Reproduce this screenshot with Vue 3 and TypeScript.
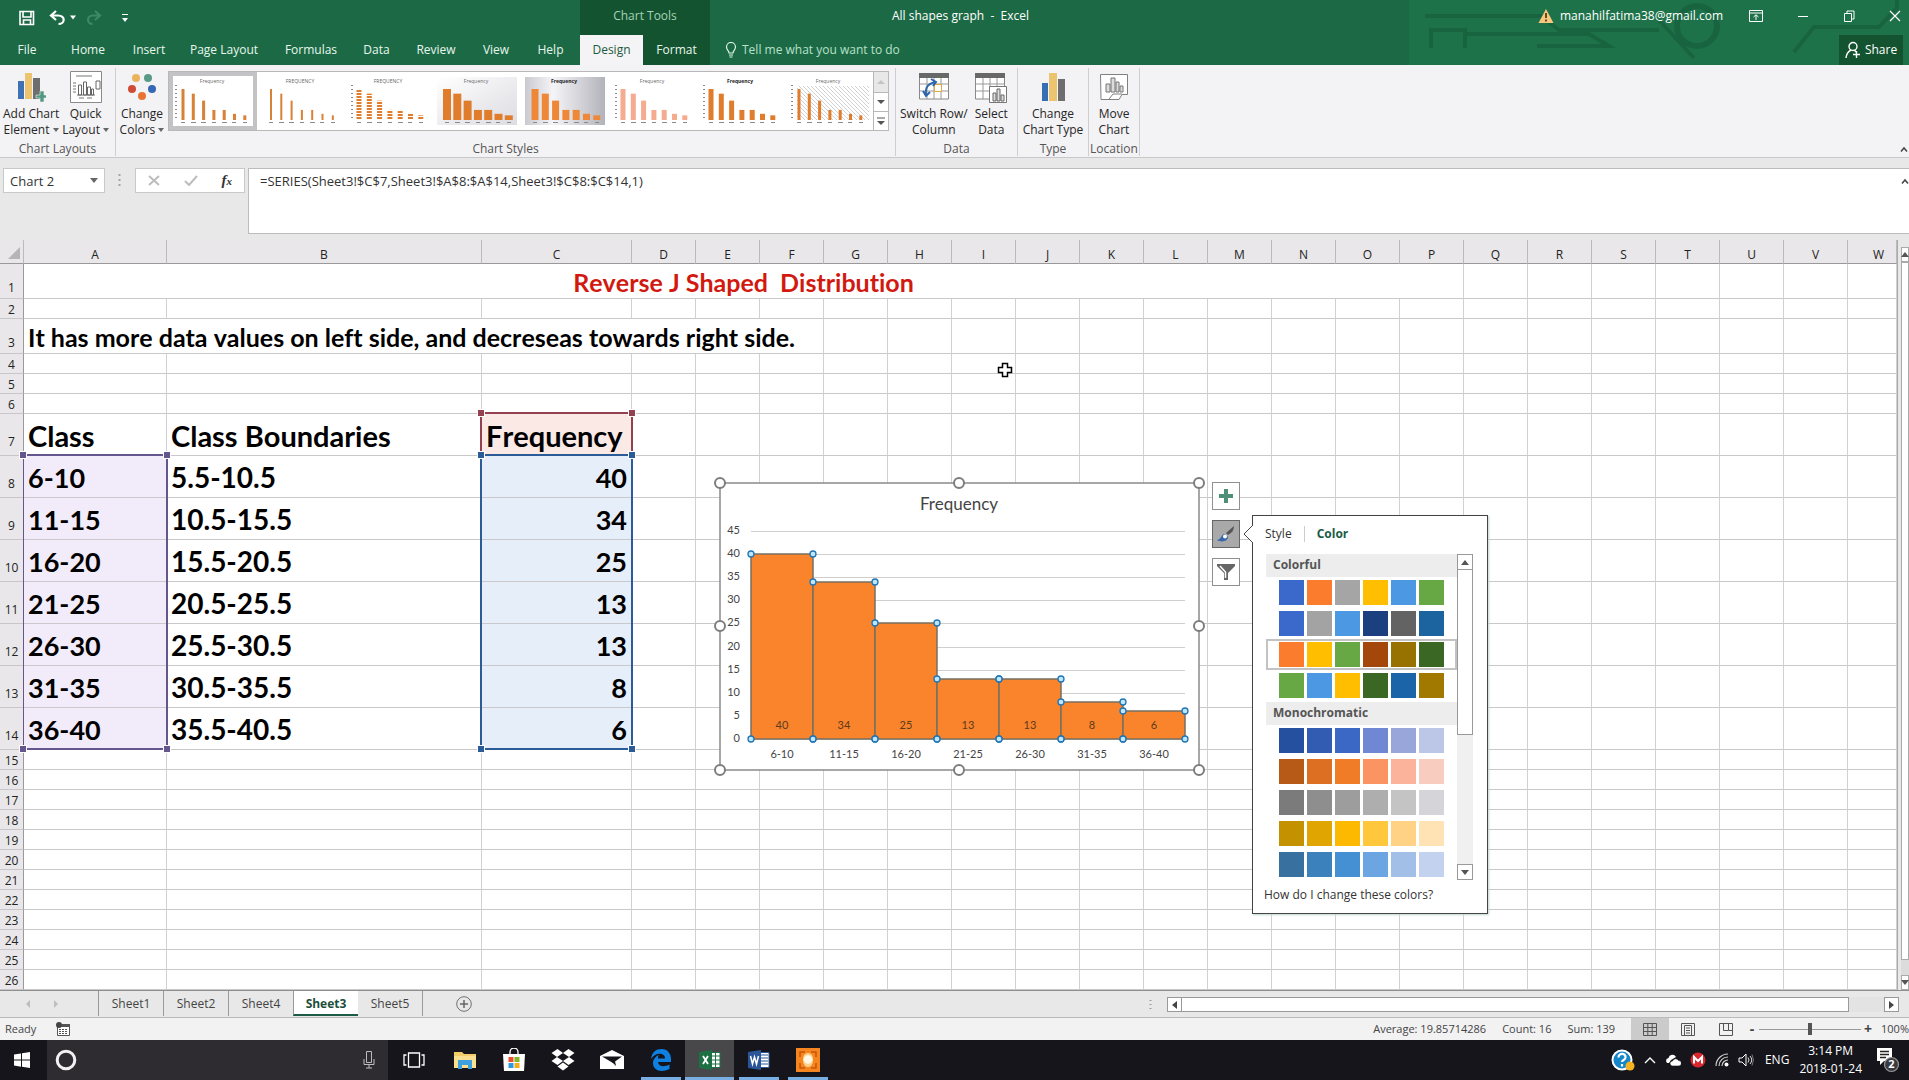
<script setup lang="ts">
import { ref } from 'vue'

const menuTabs = ['File', 'Home', 'Insert', 'Page Layout', 'Formulas', 'Data', 'Review', 'View', 'Help', 'Design', 'Format']

interface StyleThumb { id: number; kind: string; barWidth: number; title: string }
const thumbs: StyleThumb[] = [
  { id: 1, kind: 'plain', barWidth: 3, title: 'Frequency' },
  { id: 2, kind: 'thin', barWidth: 2, title: 'FREQUENCY' },
  { id: 3, kind: 'striped', barWidth: 5, title: 'FREQUENCY' },
  { id: 4, kind: 'wide', barWidth: 8, title: 'Frequency' },
  { id: 5, kind: 'shade', barWidth: 7, title: 'Frequency' },
  { id: 6, kind: 'soft', barWidth: 5, title: 'Frequency' },
  { id: 7, kind: 'dark', barWidth: 5, title: 'Frequency' },
  { id: 8, kind: 'hatch', barWidth: 3, title: 'Frequency' },
]
const activeThumb = ref(1)

const columns = 'ABCDEFGHIJKLMNOPQRSTUVW'.split('')
const categories = ['6-10', '11-15', '16-20', '21-25', '26-30', '31-35', '36-40']
const boundaries = ['5.5-10.5', '10.5-15.5', '15.5-20.5', '20.5-25.5', '25.5-30.5', '30.5-35.5', '35.5-40.5']
const frequencies = [40, 34, 25, 13, 13, 8, 6]
const lastRows = Array.from({ length: 12 }, (_, i) => i + 15)

const base = 256
const unit = 208 / 45
const barX = (i: number) => 31 + i * 62
const barY = (v: number) => Math.round(base - v * unit)
const axis = [0, 5, 10, 15, 20, 25, 30, 35, 40, 45]
const frameHandles = [[0, 0], [239, 0], [479, 0], [0, 143], [479, 143], [0, 287], [239, 287], [479, 287]]

const colorful = [
  ['#3b69cb', '#fb7c2c', '#a5a5a5', '#ffbf00', '#4d98e2', '#68a844'],
  ['#3b69cb', '#a3a3a3', '#4d98e2', '#1c3f80', '#636363', '#1c64a0'],
  ['#fb7c2c', '#ffbf00', '#68a844', '#a3480a', '#987200', '#3b6724'],
  ['#68a844', '#4d98e2', '#ffbf00', '#3b6724', '#1c64a8', '#a17800'],
]
const mono = [
  ['#25509f', '#325bb2', '#3a68c4', '#7088d4', '#98a6da', '#bcc6e6'],
  ['#b75a17', '#dc6f22', '#f07c28', '#fb9463', '#fbb39b', '#f9ccc0'],
  ['#7b7b7b', '#8e8e8e', '#9d9d9d', '#aeaeae', '#c4c4c4', '#d5d5d9'],
  ['#c49100', '#e0a500', '#fcb900', '#ffc83c', '#ffd285', '#ffe3b5'],
  ['#38709f', '#3b82bd', '#4590d2', '#6ba5e2', '#a2bfe8', '#c3d2ef'],
]
const pickedScheme = ref(2)
const sheets = ['Sheet1', 'Sheet2', 'Sheet4', 'Sheet3', 'Sheet5']
const currentSheet = ref('Sheet3')
const nameBox = ref('Chart 2')
const formula = ref('=SERIES(Sheet3!$C$7,Sheet3!$A$8:$A$14,Sheet3!$C$8:$C$14,1)')
const tellMe = ref('')
const zoomLevel = ref(50)
</script>

<template>
  <div class="app">
    <header class="top">
      <svg class="art" viewBox="0 0 500 65" aria-hidden="true">
        <g fill="none" stroke="#17603d" stroke-width="4">
          <path d="M16 16H132L150 30H250M22 48V30H56V48M56 34H180L200 46H128M250 20L285 58" />
          <circle cx="288" cy="26" r="20" stroke-width="6" />
          <path d="M385 52L405 27H470L488 8V0" />
        </g>
      </svg>
      <div class="titlebar">
        <div class="quick">
          <button aria-label="Save"><svg width="16" height="16" viewBox="0 0 16 16"><path d="M1 1.5h13.5v13H1zM4 2v5h8V2M4.500 14V10h7v4" fill="none" stroke="#fff" stroke-width="1.600" /></svg></button>
          <button class="undo" aria-label="Undo"><svg width="28" height="16" viewBox="0 0 28 16"><path d="M7 1L2 5.500L7 10M2.500 5.500H9C17 5.500 16 14 9.500 14" fill="none" stroke="#fff" stroke-width="2.200" /><path d="M21 5.500h6l-3 4z" fill="#fff" /></svg></button>
          <button class="redo" aria-label="Redo"><svg width="28" height="16" viewBox="0 0 28 16"><path d="M10 1l5 4.500L10 10M14.500 5.500H8C1 5.500 2 14 7.500 14" fill="none" stroke="#3a8a63" stroke-width="2.200" /></svg></button>
          <button aria-label="Customize quick access"><svg width="8" height="10" viewBox="0 0 8 10"><path d="M1 1.500h6" stroke="#fff" /><path d="M1 5h6L4 9z" fill="#fff" /></svg></button>
        </div>
        <div class="tools">Chart Tools</div>
        <h1 class="doc">All shapes graph&nbsp; -&nbsp; Excel</h1>
        <div class="account">
          <svg width="16" height="16" viewBox="0 0 16 16"><path d="M8 1L15.500 15H.5z" fill="#f7c77e" /><path d="M8 5v5M8 11.500v2" stroke="#5b3b12" stroke-width="1.800" /></svg>
          <span>manahilfatima38@gmail.com</span>
        </div>
        <div class="winbtns">
          <button aria-label="Ribbon display options"><svg width="14" height="12" viewBox="0 0 14 12"><path d="M.5.5h13v11H.5zM.5 3h13M7 10V5M4.500 7L7 4.800L9.500 7" fill="none" stroke="#fff" /></svg></button>
          <button aria-label="Minimize"><svg width="12" height="12" viewBox="0 0 12 12"><path d="M1 6.500h10" stroke="#fff" /></svg></button>
          <button aria-label="Restore"><svg width="12" height="12" viewBox="0 0 12 12"><path d="M1.500 3.500h7v8h-7zM4 3.500V1h7v8H8.500" fill="none" stroke="#fff" /></svg></button>
          <button aria-label="Close"><svg width="12" height="12" viewBox="0 0 12 12"><path d="M1 1l10 10M11 1L1 11" stroke="#fff" stroke-width="1.200" /></svg></button>
        </div>
      </div>
      <div class="tabrow">
        <nav class="tabs">
          <button v-for="t in menuTabs" :key="t" :class="{ sel: t === 'Design', ctx: t === 'Format' }">{{ t }}</button>
        </nav>
        <label class="tell">
          <svg width="12" height="16" viewBox="0 0 12 16"><path d="M4 11C4 8.500 1.500 8 1.500 5A4.500 4.500 0 0 1 10.500 5C10.500 8 8 8.500 8 11zM4 13h4M4.500 15h3" fill="none" stroke="#dff5e8" stroke-width="1.200" /></svg>
          <input v-model="tellMe" placeholder="Tell me what you want to do" aria-label="Tell me what you want to do" />
        </label>
        <button class="share"><svg width="16" height="18" viewBox="0 0 16 18"><circle cx="8" cy="5.500" r="4" fill="none" stroke="#fff" stroke-width="1.400" /><path d="M6 9C3 10.500 1.500 13 1 17M9.500 9l1.500 2M11.500 10v7M8 13.500h7" fill="none" stroke="#fff" stroke-width="1.400" /></svg>Share</button>
      </div>
    </header>

    <section class="ribbon">
      <div class="group g1">
        <div class="cmds">
          <button class="cmd">
            <svg width="30" height="32" viewBox="0 0 30 32"><path d="M2 10h6v18H2z" fill="#3f72b5" /><path d="M9 2h7v26H9z" fill="#ecc36f" /><path d="M17 7h7v21h-7z" fill="#6e6e6e" /><path d="M20 24h4v-4h4v4h3v3h-3v4h-4v-4h-4z" fill="#4f9a80" stroke="#f4f3f5" stroke-width=".6" /></svg>
            <span>Add Chart<br />Element <i></i></span>
          </button>
          <button class="cmd">
            <svg width="32" height="32" viewBox="0 0 32 32"><path d="M.5.5h31v31H.5z" fill="#fff" stroke="#8a8a8a" /><path d="M6 5h16M9 27h5M17 27h5M3 12h3M3 15h3M3 18h3M3 21h3M7 24h18" stroke="#777" /><path d="M8.500 14h3v10h-3zM13.500 11h3v13h-3zM17.500 16h3v8h-3zM21.500 18h2v6h-2zM26 10h4v8h-4z" fill="none" stroke="#666" /></svg>
            <span>Quick<br />Layout <i></i></span>
          </button>
        </div>
        <div class="gname">Chart Layouts</div>
      </div>
      <div class="group g2">
        <div class="cmds">
          <button class="cmd">
            <svg width="30" height="32" viewBox="0 0 30 32"><circle cx="9" cy="7" r="4" fill="#e9b45d" /><circle cx="21" cy="7" r="4" fill="#589a86" /><circle cx="5" cy="18" r="4" fill="#cf4b35" /><circle cx="25" cy="18" r="4" fill="#3567b5" /><circle cx="15" cy="25" r="4" fill="#e87432" /></svg>
            <span>Change<br />Colors <i></i></span>
          </button>
          <div class="gallery">
            <button v-for="t in thumbs" :key="t.id" :class="['thumb', { on: t.id === activeThumb }]" :aria-label="'Style ' + t.id" @click="activeThumb = t.id">
              <svg viewBox="0 0 88 58" width="88" height="58">
                <defs>
                  <linearGradient id="shadeFill" x1="0" x2="1"><stop offset="0" stop-color="#c9c9d0" /><stop offset=".35" stop-color="#f5f5f8" /><stop offset="1" stop-color="#b3b3bb" /></linearGradient>
                  <linearGradient id="wideFill" x1="0" y1="0" x2="1" y2="1"><stop offset="0" stop-color="#fff" /><stop offset="1" stop-color="#dcdce2" /></linearGradient>
                  <pattern id="hatchFill" width="4" height="4" patternUnits="userSpaceOnUse"><path d="M0 0L4 4" stroke="#bdbdbd" stroke-width=".7" /></pattern>
                  <pattern id="stripeFill" width="6" height="3" patternUnits="userSpaceOnUse"><path d="M0 1h6" stroke="#e07d2c" stroke-width="2" /></pattern>
                </defs>
                <rect v-if="t.kind === 'shade'" x="4" y="5" width="80" height="48" fill="url(#shadeFill)" />
                <rect v-if="t.kind === 'wide'" x="4" y="5" width="80" height="48" fill="url(#wideFill)" />
                <rect v-if="t.kind === 'hatch'" x="12" y="14" width="72" height="34" fill="url(#hatchFill)" />
                <text x="43" y="11" text-anchor="middle" :class="['tt', t.kind]">{{ t.title }}</text>
                <rect v-for="(v, i) in frequencies" :key="i" :class="['tb', t.kind]" :x="14 + i * 10.3 - t.barWidth / 2" :y="48 - v * 0.775" :width="t.barWidth" :height="v * 0.775" />
                <path d="M12 50.500h4M22 50.500h5M32 50.500h5M43 50.500h4M53 50.500h5M63 50.500h4M74 50.500h4" stroke="#8b8b8b" />
                <path v-if="t.kind !== 'wide' && t.kind !== 'shade' && t.kind !== 'thin'" d="M7 13v36" stroke="#888" stroke-width="2" stroke-dasharray="1 3" />
              </svg>
            </button>
            <div class="gscroll">
              <button aria-label="Scroll up" disabled><svg width="8" height="6"><path d="M0 5h8L4 1z" fill="#c4c4c4" /></svg></button>
              <button aria-label="Scroll down"><svg width="8" height="6"><path d="M0 1h8L4 5z" fill="#555" /></svg></button>
              <button aria-label="More styles"><svg width="8" height="9"><path d="M0 1h8" stroke="#555" /><path d="M0 4h8L4 8z" fill="#555" /></svg></button>
            </div>
          </div>
        </div>
        <div class="gname">Chart Styles</div>
      </div>
      <div class="group g3">
        <div class="cmds">
          <button class="cmd">
            <svg width="30" height="32" viewBox="0 0 30 32"><path d="M.5 3h29v25H.5z" fill="#fff" stroke="#888" /><path d="M0 2h30v5H0z" fill="#686868" /><path d="M.5 13h29M.5 20h29M8 7v21M15 7v21M22 7v21" stroke="#999" fill="none" /><path d="M15.500 13.500h7v7h-7z" fill="#fff" stroke="#e0a943" /><path d="M7 24C6 16 9 13 16 11M4 20l3 5l4-4M12 8l5 3l-3 4" fill="none" stroke="#2c66ad" stroke-width="2" /></svg>
            <span>Switch Row/<br />Column</span>
          </button>
          <button class="cmd">
            <svg width="32" height="32" viewBox="0 0 32 32"><path d="M.5 3h29v25H.5z" fill="#fff" stroke="#888" /><path d="M0 2h30v5H0z" fill="#686868" /><path d="M.5 13h29M.5 20h29M8 7v21M15 7v21M22 7v21" stroke="#999" fill="none" /><path d="M14.500 15.500h17v16h-17z" fill="#fff" stroke="#777" /><path d="M18 22h3v8h-3zM22 18h3v12h-3zM26 24h3v6h-3z" fill="#ddd" stroke="#666" /></svg>
            <span>Select<br />Data</span>
          </button>
        </div>
        <div class="gname">Data</div>
      </div>
      <div class="group g4">
        <div class="cmds">
          <button class="cmd">
            <svg width="26" height="32" viewBox="0 0 26 32"><path d="M2 12h6v18H2z" fill="#356fb5" /><path d="M9 2h8v28H9z" fill="#ecc36f" /><path d="M18 8h7v22h-7z" fill="#6e6e6e" /></svg>
            <span>Change<br />Chart Type</span>
          </button>
        </div>
        <div class="gname">Type</div>
      </div>
      <div class="group g5">
        <div class="cmds">
          <button class="cmd">
            <svg width="28" height="32" viewBox="0 0 28 32"><path d="M.5 3.500h27v20H22l-3 5H1z" fill="#fff" stroke="#808080" /><path d="M9 28l4-5h9" fill="none" stroke="#808080" /><path d="M6 13h4v8H6zM11 7h4v14h-4zM16 11h3v10h-3zM20 15h3v6h-3z" fill="#ddd" stroke="#777" /></svg>
            <span>Move<br />Chart</span>
          </button>
        </div>
        <div class="gname">Location</div>
      </div>
      <button class="collapse" aria-label="Collapse the ribbon"><svg width="8" height="7" viewBox="0 0 8 7"><path d="M1 5.500L4 2L7 5.500" fill="none" stroke="#444" stroke-width="1.500" /></svg></button>
    </section>

    <section class="fbar">
      <div class="namebox"><input v-model="nameBox" aria-label="Name box" /><svg width="8" height="5"><path d="M0 0h8L4 5z" fill="#666" /></svg></div>
      <svg class="grip" width="3" height="16"><path d="M1.500 1v14" stroke="#a5a5a5" stroke-width="2" stroke-dasharray="2 3" /></svg>
      <div class="fx">
        <button aria-label="Cancel"><svg width="12" height="11"><path d="M1 1l10 9M11 1L1 10" stroke="#bdbdbd" stroke-width="2" /></svg></button>
        <button aria-label="Enter"><svg width="14" height="11"><path d="M1 6l4 4L13 1" fill="none" stroke="#bdbdbd" stroke-width="2" /></svg></button>
        <button class="fxi" aria-label="Insert function">f<sub>x</sub></button>
      </div>
      <textarea v-model="formula" aria-label="Formula bar" spellcheck="false"></textarea>
      <button class="collapse2" aria-label="Collapse formula bar"><svg width="8" height="7" viewBox="0 0 8 7"><path d="M1 5.500L4 2L7 5.500" fill="none" stroke="#444" stroke-width="1.500" /></svg></button>
    </section>

    <main class="stage">
      <table class="sheet">
        <colgroup><col class="ch" /><col class="ca" /><col class="cb" /><col class="cc" /><col v-for="n in 19" :key="n" class="cn" /><col /></colgroup>
        <thead>
          <tr><th class="corner"><svg width="12" height="12"><path d="M12 0v12H0z" fill="#b5b5b5" /></svg></th><th v-for="c in columns" :key="c">{{ c }}</th></tr>
        </thead>
        <tbody>
          <tr class="mid"><th>1</th><td colspan="16" class="title">Reverse J Shaped&nbsp; Distribution</td><td v-for="n in 7" :key="n"></td></tr>
          <tr><th>2</th><td v-for="n in 23" :key="n"></td></tr>
          <tr class="mid"><th>3</th><td colspan="6">It has more data values on left side, and decreseas towards right side.</td><td v-for="n in 17" :key="n"></td></tr>
          <tr v-for="r in [4, 5, 6]" :key="r"><th>{{ r }}</th><td v-for="n in 23" :key="n"></td></tr>
          <tr class="big heads"><th>7</th><td>Class</td><td>Class Boundaries</td><td class="fh">Frequency</td><td v-for="n in 20" :key="n"></td></tr>
          <tr v-for="(c, i) in categories" :key="c" class="big">
            <th>{{ i + 8 }}</th><td class="cat">{{ c }}</td><td class="bound">{{ boundaries[i] }}</td><td class="val">{{ frequencies[i] }}</td><td v-for="n in 20" :key="n"></td>
          </tr>
          <tr v-for="r in lastRows" :key="r"><th>{{ r }}</th><td v-for="n in 23" :key="n"></td></tr>
        </tbody>
      </table>
      <div class="vscroll">
        <button aria-label="Scroll up"><svg width="8" height="6"><path d="M0 5h8L4 0z" fill="#555" /></svg></button>
        <div class="vthumb"></div>
        <div class="vtrack"></div>
        <button aria-label="Scroll down"><svg width="8" height="6"><path d="M0 0h8L4 5z" fill="#555" /></svg></button>
      </div>

      <div class="range rcat"><b></b><b></b><b></b><b></b></div>
      <div class="range rhead"><b></b><b></b></div>
      <div class="range rval"><b></b><b></b><b></b><b></b></div>

      <svg class="cursor" width="16" height="16" viewBox="0 0 16 16"><path d="M5.500 1.500h5v4h4v5h-4v4h-5v-4h-4v-5h4z" fill="#fff" stroke="#000" stroke-width="1.500" /></svg>

      <svg class="chart" width="494" height="302" viewBox="-7 -6 494 302" role="img" aria-label="Frequency histogram">
        <rect x="0" y="0" width="479" height="287" fill="#fff" stroke="#8a8a8a" stroke-width="1.500" />
        <text class="ctitle" x="239" y="27" text-anchor="middle">Frequency</text>
        <line v-for="a in axis" :key="'l' + a" x1="31" x2="465" :y1="barY(a) + 0.5" :y2="barY(a) + 0.5" stroke="#cfcfcf" />
        <text v-for="a in axis" :key="'t' + a" class="ax" x="20" :y="barY(a) + 3" text-anchor="end">{{ a }}</text>
        <rect v-for="(v, i) in frequencies" :key="'b' + i" :x="barX(i)" :y="barY(v)" width="62" :height="base - barY(v)" fill="#f9842c" stroke="#77705f" stroke-width="1.500" />
        <text v-for="(v, i) in frequencies" :key="'v' + i" class="ax dl" :x="barX(i) + 31" y="246" text-anchor="middle">{{ v }}</text>
        <text v-for="(c, i) in categories" :key="'c' + i" class="ax" :x="barX(i) + 31" y="275" text-anchor="middle">{{ c }}</text>
        <g v-for="(v, i) in frequencies" :key="'h' + i" fill="#bfe6fb" stroke="#1f75b5" stroke-width="1.300">
          <circle :cx="barX(i)" :cy="barY(v)" r="3" /><circle :cx="barX(i) + 62" :cy="barY(v)" r="3" />
          <circle :cx="barX(i)" :cy="base" r="3" /><circle :cx="barX(i) + 62" :cy="base" r="3" />
        </g>
        <circle v-for="(h, i) in frameHandles" :key="i" :cx="h[0]" :cy="h[1]" r="5" fill="#fff" stroke="#7d7d7d" stroke-width="2" />
      </svg>

      <div class="sidebtns">
        <button aria-label="Chart elements"><svg width="14" height="14"><path d="M5 0h4v5h5v4H9v5H5V9H0V5h5z" fill="#4f8f78" /></svg></button>
        <button class="down" aria-label="Chart styles"><svg width="20" height="20" viewBox="0 0 20 20"><path d="M18 2L10 9L12 11C16 9 18 6 18 2z" fill="#555" /><path d="M9 10C5 10 6 15 1 16C6 19 12 17 12 13z" fill="#3866a8" /><circle cx="9" cy="12.500" r="2" fill="#fff" /></svg></button>
        <button aria-label="Chart filters"><svg width="20" height="18" viewBox="0 0 20 18"><path d="M1 1h18v2l-7 7v7H8v-7L1 3z" fill="#666" /><path d="M4 3l5.500 6v6" fill="none" stroke="#fff" stroke-width="1.500" /></svg></button>
      </div>

      <aside class="panel">
        <svg class="tip" width="10" height="18" viewBox="0 0 10 18"><path d="M10 0L1 9L10 18" fill="#fff" stroke="#444" /></svg>
        <div class="ptabs"><button>Style</button><button class="on">Color</button></div>
        <div class="pbody">
          <div class="plist">
            <h2>Colorful</h2>
            <button v-for="(row, i) in colorful" :key="'c' + i" :class="['scheme', { on: i === pickedScheme }]" :aria-label="'Colorful palette ' + (i + 1)" @click="pickedScheme = i">
              <i v-for="(c, k) in row" :key="k" :style="{ background: c }"></i>
            </button>
            <h2>Monochromatic</h2>
            <button v-for="(row, i) in mono" :key="'m' + i" class="scheme" :aria-label="'Monochromatic palette ' + (i + 1)">
              <i v-for="(c, k) in row" :key="k" :style="{ background: c }"></i>
            </button>
          </div>
          <div class="pscroll">
            <button aria-label="Scroll up"><svg width="8" height="5"><path d="M0 5h8L4 0z" fill="#555" /></svg></button>
            <div class="pthumb"></div>
            <div class="ptrack"></div>
            <button aria-label="Scroll down"><svg width="8" height="5"><path d="M0 0h8L4 5z" fill="#555" /></svg></button>
          </div>
        </div>
        <a href="#">How do I change these colors?</a>
      </aside>
    </main>

    <div class="sheetbar">
      <div class="snav">
        <button aria-label="Previous sheet"><svg width="5" height="8"><path d="M5 0v8L1 4z" fill="#bdbdbd" /></svg></button>
        <button aria-label="Next sheet"><svg width="5" height="8"><path d="M0 0v8l4-4z" fill="#bdbdbd" /></svg></button>
      </div>
      <button v-for="(s, i) in sheets" :key="s" :class="['stab', { on: s === currentSheet, first: i === 0 }]" @click="currentSheet = s">{{ s }}</button>
      <button class="plus" aria-label="New sheet"><svg width="16" height="16" viewBox="0 0 16 16"><circle cx="8" cy="8" r="7.300" fill="none" stroke="#707070" /><path d="M8 4v8M4 8h8" stroke="#666" stroke-width="1.500" /></svg></button>
      <svg class="sgrip" width="3" height="10"><path d="M1.500 0v10" stroke="#999" stroke-dasharray="1 3" stroke-width="2" /></svg>
      <div class="hscroll">
        <button aria-label="Scroll left"><svg width="5" height="8"><path d="M5 0v8L0 4z" fill="#444" /></svg></button>
        <div class="hthumb"></div>
        <div class="htrack"></div>
        <button aria-label="Scroll right"><svg width="5" height="8"><path d="M0 0v8l5-4z" fill="#444" /></svg></button>
      </div>
    </div>

    <div class="status">
      <span class="ready">Ready</span>
      <svg width="14" height="14" viewBox="0 0 14 14"><path d="M1.500 4.500h12v9h-12z" fill="#fff" stroke="#555" /><path d="M6 2h8v3H6z" fill="#555" /><circle cx="3" cy="3" r="3" fill="#444" /><path d="M3 7.500h9M3 9.500h9M3 11.500h9" stroke="#555" stroke-dasharray="2 1" /></svg>
      <span class="st avg">Average: 19.85714286</span><span class="st">Count: 16</span><span class="st">Sum: 139</span>
      <div class="views">
        <button class="on" aria-label="Normal view"><svg width="14" height="13" viewBox="0 0 14 13"><path d="M.5.5h13v12H.5zM.5 4.500h13M.5 8.500h13M4.800.5v12M9.200.5v12" fill="none" stroke="#555" /></svg></button>
        <button aria-label="Page layout view"><svg width="14" height="13" viewBox="0 0 14 13"><path d="M.5.5h13v12H.5zM3.500 2.500h7v10h-7zM5 5h4M5 7.500h4M5 10h4" fill="none" stroke="#555" /></svg></button>
        <button aria-label="Page break preview"><svg width="14" height="13" viewBox="0 0 14 13"><path d="M.5.5h13v12H.5zM4.500.5v7h5v-7M9.500 7.500h4" fill="none" stroke="#555" /></svg></button>
      </div>
      <button class="zb" aria-label="Zoom out">-</button>
      <input v-model="zoomLevel" class="zoom" type="range" min="0" max="100" aria-label="Zoom" />
      <button class="zb" aria-label="Zoom in">+</button>
      <span class="pct">100%</span>
    </div>

    <footer class="task">
      <button class="start" aria-label="Start"><svg width="16" height="16" viewBox="0 0 16 16"><path d="M0 2.500L7 1.500V7.600H0zM8 1.300L16 0V7.600H8zM0 8.500h7v6.200L0 13.500zM8 8.500h8V16l-8-1.200z" fill="#fff" /></svg></button>
      <div class="search">
        <button aria-label="Cortana"><svg width="22" height="22" viewBox="0 0 22 22"><circle cx="11" cy="11" r="8.800" fill="none" stroke="#f2f2f2" stroke-width="3" /></svg></button>
        <button aria-label="Microphone"><svg width="12" height="18" viewBox="0 0 12 18"><path d="M3.500.5h5v11h-5zM1 8v5.500h10V8M6 13.500V17M3 17h6" fill="none" stroke="#bbb" /></svg></button>
      </div>
      <div class="apps">
        <button class="view" aria-label="Task view"><svg width="22" height="16" viewBox="0 0 22 16"><path d="M5.500 1h11v14h-11zM3.500 3H1v10h2.500M18.500 3H21v10h-2.500" fill="none" stroke="#fff" stroke-width="1.300" /></svg></button>
        <button aria-label="File Explorer"><svg width="22" height="20" viewBox="0 0 22 20"><path d="M0 2h8l2 2h12v14H0z" fill="#f3ce68" /><path d="M0 6h22v12H0z" fill="#fbe08f" /><path d="M4 19v-9h14v9h-4v-4H8v4z" fill="#3ba1e0" /></svg></button>
        <button aria-label="Store"><svg width="24" height="24" viewBox="0 0 24 24"><path d="M8 7V4a4 4 0 0 1 8 0v3" fill="none" stroke="#fff" stroke-width="1.300" /><path d="M1 6h22l-1 17H2z" fill="#fff" /><path d="M6.500 9h5v5h-5z" fill="#e8502e" /><path d="M12.500 9h5v5h-5z" fill="#7db928" /><path d="M6.500 15h5v5h-5z" fill="#2b9be0" /><path d="M12.500 15h5v5h-5z" fill="#f5ad1d" /></svg></button>
        <button aria-label="Dropbox"><svg width="24" height="22" viewBox="0 0 24 22"><path d="M6.500 0L12 4L6 8L.5 4zM17.500 0L23.500 4L18 8L12 4zM6 8l6 4l-5.500 4L.5 12zM18 8l5.500 4l-6 4L12 12zM6.500 17.500L12 13.500l5.500 4L12 21.500z" fill="#fff" /></svg></button>
        <button aria-label="Mail"><svg width="24" height="20" viewBox="0 0 24 20"><path d="M0 6L12 0L24 6V19H0z" fill="#fff" /><path d="M2 6.500H22L13 13z" fill="#15151b" /><path d="M12 12l4 4l-1-5z" fill="#15151b" /></svg></button>
        <button class="run" aria-label="Edge"><svg width="20" height="22" viewBox="0 0 20 22"><path d="M0 10C1 3 5 0 10.500 0C17 0 20 5 20 10V13H7C7.500 17.500 13 18.500 18.500 15.500V20C10 24 2 21.500 2 14C2 10 5 7 8 6C7 7.500 7 8 7 9.500H14C14 3 4 3.500 0 10z" fill="#0f7fe0" /></svg></button>
        <button class="run cur" aria-label="Excel"><svg width="22" height="20" viewBox="0 0 22 20"><path d="M12 2.500h9v15h-9z" fill="#fff" stroke="#1d7044" /><path d="M12 6h9M12 10h9M12 14h9M16.500 3v14" stroke="#1d7044" /><path d="M0 2L13 0v20L0 18z" fill="#1d7044" /><path d="M4 6l5 8M9 6l-5 8" stroke="#fff" stroke-width="1.800" /></svg></button>
        <button class="run" aria-label="Word"><svg width="22" height="20" viewBox="0 0 22 20"><path d="M12 2.500h9v15h-9z" fill="#fff" stroke="#2a5699" /><path d="M13 5h7M13 8h7M13 11h7M13 14h7" stroke="#2a5699" /><path d="M0 2L13 0v20L0 18z" fill="#2a5699" /><path d="M2.500 6l2 8L6.500 7l2 7l2-8" fill="none" stroke="#fff" stroke-width="1.500" /></svg></button>
        <button class="run" aria-label="Screen recorder"><svg width="24" height="24" viewBox="0 0 24 24"><path d="M0 0h24v24H0z" fill="#f5861f" /><path d="M4 9V4h5M15 4h5v5M20 15v5h-5M9 20H4v-5" fill="none" stroke="#c9540c" stroke-width="1.500" /><path d="M12 5C16 5 17.500 9 17 13C16.500 17 14.500 19 12 19C9.500 19 7.500 17 7 13C6.500 9 8 5 12 5z" fill="#ffd08a" /><circle cx="12" cy="11.500" r="4.200" fill="#fff8e6" /></svg></button>
      </div>
      <div class="tray">
        <svg width="24" height="22" viewBox="0 0 24 22"><circle cx="11" cy="11" r="9.500" fill="#1586c8" stroke="#fff" stroke-width="2" /><path d="M7.500 8.500C7.500 3.500 15 4 14.500 8.500C14.500 11 11 11 11 13M11 15v2.500" fill="none" stroke="#fff" stroke-width="2.200" /><circle cx="19" cy="17" r="4.500" fill="#f5b324" /></svg>
        <svg width="12" height="8" viewBox="0 0 12 8"><path d="M1 7l5-5l5 5" fill="none" stroke="#fff" stroke-width="1.400" /></svg>
        <svg width="16" height="12" viewBox="0 0 16 12"><path d="M1 7a3 3 0 0 1 2.500-3A4 4 0 0 1 11 3L6 6L4 9H2z" fill="#fff" /><path d="M5 9.500a2.500 2.500 0 0 1 2.500-2.500a3.300 3.300 0 0 1 6-.5A2.600 2.600 0 0 1 14 12H7A2.500 2.500 0 0 1 5 9.500z" fill="#fff" stroke="#111" stroke-width=".6" /></svg>
        <svg width="16" height="16" viewBox="0 0 16 16"><circle cx="8" cy="8" r="7.500" fill="#d9272e" /><path d="M4 11.500V5l4 4l4-4v6.500" fill="none" stroke="#fff" stroke-width="2" /></svg>
        <svg width="14" height="14" viewBox="0 0 14 14"><path d="M1 13A12 12 0 0 1 13 1M4 13A9 9 0 0 1 13 4M7 13A6 6 0 0 1 13 7" fill="none" stroke="#cfcfcf" stroke-width="1.200" /><circle cx="11.500" cy="11.500" r="2" fill="#fff" /></svg>
        <svg width="16" height="14" viewBox="0 0 16 14"><path d="M1 5h3l4-4v12L4 9H1z" fill="none" stroke="#fff" /><path d="M10 4.500q2 2.500 0 5M12 3q3.500 4 0 8" fill="none" stroke="#ddd" /><path d="M14 1.500q3 5.500 0 11" fill="none" stroke="#777" /></svg>
        <span class="lang">ENG</span>
        <span class="clock">3:14 PM<br />2018-01-24</span>
        <div class="notif"><svg width="24" height="26" viewBox="0 0 24 26"><path d="M1 1h15v13H8l-4 4v-4H1z" fill="#fff" /><path d="M4 4.500h9M4 7.500h9M4 10.500h6" stroke="#222" stroke-width="1.300" /><circle cx="15.500" cy="17.500" r="7" fill="#3a3a42" stroke="#999" stroke-width="1.200" /></svg><em>2</em></div>
      </div>
    </footer>
  </div>
</template>

<style>
body { margin: 0; background: #15151b; }
</style>

<style scoped>
.app { min-height: 100vh; display: flex; flex-direction: column; font: 12px/16px "Open Sans", "Noto Sans", sans-serif; color: #333; overflow: hidden; background: #e9e8e9; }
.app *, .app *::before { box-sizing: border-box; }
button { font: inherit; color: inherit; background: none; border: 0; padding: 0; margin: 0; display: flex; align-items: center; justify-content: center; white-space: nowrap; }
svg { display: block; flex: none; }
input, textarea { font: inherit; color: inherit; border: 0; background: none; padding: 0; margin: 0; outline: 0; }

.top { background: #1c6a45; color: #e8f7ee; position: relative; }
.art { position: absolute; right: 0; top: 0; width: 500px; height: 65px; opacity: .5; background: #217a50; }
.titlebar, .tabrow { position: relative; display: flex; align-items: stretch; }
.titlebar { height: 35px; }
.quick { width: 580px; display: flex; align-items: center; padding: 0 0 0 19px; gap: 14px; }
.undo { margin-right: -6px; }
.redo { margin-right: -6px; }
.tools { width: 130px; background: #14532f; line-height: 32px; text-align: center; color: #a5d3b8; }
.doc { flex: 1; margin: 0; padding: 0 0 0 182px; font: inherit; line-height: 32px; color: #fff; }
.account { display: flex; align-items: center; gap: 6px; padding-bottom: 3px; color: #fff; }
.winbtns { display: flex; align-items: center; gap: 34px; padding: 0 8px 4px 26px; }
.tabrow { height: 30px; }
.tabs { display: grid; grid-template-columns: 54px 68px 54px 96px 78px 53px 66px 54px 55px 65px 67px; }
.tabs .sel { background: #f4f3f5; color: #1c5b3c; margin-left: 2px; }
.tabs .ctx { background: #14532f; }
.tell { display: flex; align-items: center; gap: 5px; flex: 1; padding-left: 15px; }
.tell input { width: 220px; }
.tell input::placeholder { color: #b8e0c9; opacity: 1; }
.share { background: #14532f; width: 64px; gap: 4px; margin-right: 6px; color: #fff; }

.ribbon { display: flex; height: 93px; background: #f3f2f4; border-bottom: 1px solid #c9c7ca; position: relative; }
.group { border-right: 1px solid #cfcdd0; margin: 3px 0 1px; display: flex; flex-direction: column; justify-content: space-between; }
.g1 { width: 116px; }
.g2 { width: 780px; }
.g3 { width: 122px; }
.g4 { width: 71px; }
.g5 { width: 51px; }
.cmds { display: flex; justify-content: center; }
.g1 .cmds { justify-content: flex-start; gap: 3px; padding-left: 3px; }
.g2 .cmds { justify-content: flex-start; }
.g2 .cmd { width: 52px; }
.g3 .cmds { justify-content: flex-start; gap: 7px; padding-left: 4px; }
.cmd { flex-direction: column; justify-content: flex-start; gap: 3px; padding-top: 3px; color: #262626; }
.cmd span { text-align: center; }
.cmd i { display: inline-block; border: 3px solid transparent; border-top: 4px solid #666; border-bottom: 0; vertical-align: 2px; }
.gname { text-align: center; color: #555; height: 14px; line-height: 14px; }
.gallery { display: flex; height: 60px; margin-top: 3px; background: #fff; border: 1px solid #b8b8b8; width: 721px; }
.thumb { width: 88px; height: 58px; }
.thumb.on { box-shadow: inset 0 0 0 4px #c3c3c5; }
.tt { font: 5px "Open Sans", sans-serif; fill: #666; }
.tt.shade, .tt.dark { font-weight: 700; fill: #222; }
.tb { fill: #e07d2c; }
.tb.striped { fill: url(#stripeFill); }
.tb.soft { fill: #f5ab90; }
.tb.plain, .tb.thin { fill: #d88238; }
.tb.shade { fill: #ee8838; }
.gscroll { border-left: 1px solid #b8b8b8; flex: 1; display: grid; grid-template-rows: 20px 19px 19px; }
.gscroll button + button { border-top: 1px solid #b8b8b8; }
.gscroll button:first-child { background: #e8e8e8; }
.collapse { position: absolute; right: 1px; bottom: 4px; }

.fbar { display: flex; align-items: flex-start; height: 82px; padding: 10px 0 0 3px; position: relative; }
.namebox { width: 102px; height: 25px; background: #fff; border: 1px solid #c9c9c9; display: flex; align-items: center; padding: 0 6px; font-size: 13px; }
.namebox input { flex: 1; min-width: 0; }
.grip { margin: 5px 14px 0 13px; }
.fx { display: flex; width: 110px; height: 25px; background: #fff; border: 1px solid #c9c9c9; justify-content: space-around; }
.fxi { font: italic bold 15px "Liberation Serif", serif; }
.fxi sub { font-size: 11px; vertical-align: -2px; line-height: 0; }
textarea { flex: 1; height: 66px; margin-left: 3px; background: #fff; border: 1px solid #bcbcbc; border-right: 0; padding: 4px 11px; resize: none; overflow: hidden; font-size: 13px; }
.collapse2 { position: absolute; right: 0; top: 20px; }

.stage { position: relative; display: flex; }
.sheet { flex: 1; width: 0; table-layout: fixed; border-collapse: separate; border-spacing: 0; background: #fff; }
.ch { width: 24px; }
.ca { width: 143px; }
.cb { width: 315px; }
.cc { width: 150px; }
.cn { width: 64px; }
.sheet th { font-weight: 400; background: #e9e7e9; color: #222; padding: 0; border-right: 1px solid #bbb; border-bottom: 1px solid #c9c6ca; vertical-align: bottom; line-height: 17px; }
.sheet thead tr { height: 24px; }
.sheet thead th { border-bottom-color: #999; line-height: 16px; }
.sheet thead th:last-child { padding-left: 13px; }
.corner svg { margin: 0 0 4px 8px; }
.sheet tbody tr { height: 20px; }
.sheet tbody tr.mid { height: 35px; }
.sheet tbody tr.big { height: 42px; }
.sheet tbody th { border-right-color: #999; }
.mid th { padding-bottom: 2px; }
.big th { padding-bottom: 5px; }
.sheet td { padding: 0 4px; border-right: 1px solid #d3d0d4; border-bottom: 1px solid #cbc8cc; vertical-align: bottom; white-space: nowrap; color: #000; font-family: Lato, "Open Sans", sans-serif; font-weight: 700; font-kerning: none; font-variant-ligatures: none; }
.mid td { font-size: 25px; line-height: 32px; }
.big td { font-size: 27px; line-height: 39px; }
.sheet .heads td { font-size: 29px; }
.sheet td.bound { font-size: 28px; }
.sheet td.title { text-align: center; color: #d2190f; }
.sheet td.fh { background: #fbe9e6; }
.sheet td.cat { background: #f2ecfa; }
.sheet td.val { background: #e6eef9; text-align: right; }
.vscroll { width: 12px; border-left: 1px solid #aaa; padding: 7px 0 0 3px; display: flex; flex-direction: column; overflow: hidden; }
.vscroll button { height: 15px; background: #fff; border: 1px solid #aaa; }
.vthumb { flex: 45; background: #fff; border: 1px solid #aaa; }
.vtrack { flex: 1; background: #dcdcdc; }

.range { position: absolute; }
.range b { position: absolute; width: 6px; height: 6px; outline: 1px solid #fff; }
.range b:nth-child(1) { left: -4px; top: -4px; }
.range b:nth-child(2) { right: -4px; top: -4px; }
.range b:nth-child(3) { left: -4px; bottom: -4px; }
.range b:nth-child(4) { right: -4px; bottom: -4px; }
.rcat { left: 23px; top: 214px; width: 145px; height: 296px; border: 2px solid #66568e; border-left-width: 1px; }
.rcat b { background: #66568e; }
.rhead { left: 480px; top: 172px; width: 153px; height: 43px; border: 2px solid #94404f; border-bottom: 0; }
.rhead b { background: #94404f; }
.rval { left: 480px; top: 214px; width: 153px; height: 296px; border: 2px solid #2b5c98; }
.rval b { background: #2b5c98; }
.cursor { position: absolute; left: 997px; top: 122px; }
.chart { position: absolute; left: 713px; top: 237px; }
.ctitle { font: 17px Lato, sans-serif; fill: #444; }
.ax { font: 11px Lato, sans-serif; fill: #444; }
.dl { fill: #5d3a1c; }
.sidebtns { position: absolute; left: 1212px; top: 242px; display: grid; gap: 10px; }
.sidebtns button { width: 28px; height: 28px; background: #fff; border: 1px solid #909090; }
.sidebtns .down { background: #a9a9a9; border-color: #666; }

.panel { position: absolute; left: 1252px; top: 275px; width: 236px; background: #fff; border: 1px solid #444; padding: 7px 13px 10px; box-shadow: 1px 1px 2px #bdd5d0; }
.tip { position: absolute; left: -10px; top: 9px; }
.ptabs { display: flex; height: 22px; align-items: center; margin: 0 0 9px -1px; }
.ptabs button + button { border-left: 1px solid #ccc; margin-left: 12px; padding-left: 12px; }
.ptabs .on { color: #1c5b45; font-weight: 700; }
.pbody { display: flex; margin-right: 1px; }
.plist { width: 192px; }
.plist h2 { margin: 0; height: 23px; font: 700 12px/22px "Open Sans", sans-serif; background: #ededed; color: #555; padding-left: 7px; }
.plist .scheme + h2 { margin-top: 1px; }
.scheme { height: 31px; width: 191px; padding-left: 11px; gap: 3px; justify-content: flex-start; border: 2px solid transparent; }
.scheme.on { border-color: #c3c3c3; }
.scheme i { width: 25px; height: 25px; }
.pscroll { width: 16px; display: flex; flex-direction: column; background: #f0f0f0; }
.pscroll button { height: 16px; border: 1px solid #999; background: #fff; }
.pthumb { height: 165px; border: 1px solid #999; border-top: 0; background: #fff; }
.ptrack { flex: 1; }
.panel a { display: block; color: #333; text-decoration: none; margin: 7px 0 0 -2px; }

.sheetbar { display: flex; height: 28px; border-top: 1px solid #8f8f8f; border-bottom: 1px solid #bbb; color: #444; background: #e8e8e8; }
.snav { width: 98px; display: flex; gap: 24px; padding-left: 25px; }
.stab { width: 65px; height: 25px; border-left: 1px solid #999; }
.stab.on { background: #fff; color: #1c4f3a; font-weight: 700; border-bottom: 2px solid #1c5b45; padding-top: 2px; }
.stab.on + .stab { border-left: 0; border-right: 1px solid #999; }
.plus { margin-left: 33px; }
.sgrip { margin: 9px 15px 0 auto; }
.hscroll { width: 732px; height: 15px; margin: 6px 10px 0 0; display: flex; background: #dcdcdc; }
.hscroll button { width: 15px; background: #fff; border: 1px solid #999; }
.hthumb { flex: 19; background: #fff; border: 1px solid #999; border-left: 0; }
.htrack { flex: 1; background: #e3e3e3; }

.status { display: flex; align-items: center; height: 22px; background: #f2f2f3; color: #444; font-size: 11px; }
.ready { padding: 0 20px 0 5px; }
.avg { margin-left: auto; }
.st { padding-right: 16px; }
.views { display: flex; height: 22px; }
.views button { width: 38px; }
.views .on { background: #cbcbcb; }
.zb { font-weight: 700; font-size: 14px; width: 14px; }
.zoom { appearance: none; width: 102px; height: 14px; background: linear-gradient(#999, #999) center / 100% 1px no-repeat; }
.zoom::-webkit-slider-thumb { appearance: none; width: 4px; height: 12px; background: #555; }
.pct { padding-left: 6px; white-space: nowrap; }

.task { display: flex; flex: 1; min-height: 40px; background: #15151b; color: #fff; }
.start { width: 47px; padding-right: 4px; }
.search { width: 341px; background: #2e2c30; display: flex; justify-content: space-between; padding: 0 13px 0 8px; }
.apps { display: flex; }
.apps button { width: 49px; position: relative; }
.apps .view { width: 52px; }
.apps .run::before { content: ""; position: absolute; bottom: 0; left: 5px; right: 4px; height: 3px; background: #78aee2; }
.apps .cur { background: #48484b; }
.apps .cur::before { left: 0; right: 0; }
.tray { margin-left: auto; display: flex; align-items: center; gap: 9px; padding-right: 9px; }
.lang { margin-left: 2px; }
.clock { text-align: center; line-height: 18px; margin: 0 5px 0 1px; }
.notif { position: relative; }
.notif em { position: absolute; left: 9px; top: 9px; width: 13px; text-align: center; font: 700 11px/16px "Open Sans", sans-serif; }
</style>
